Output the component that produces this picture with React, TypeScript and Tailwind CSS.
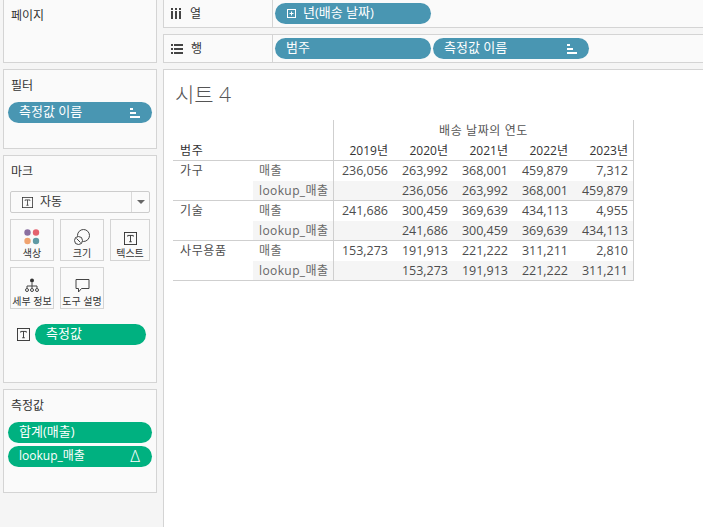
const FONT = "[font-family:'Open_Sans','Noto_Sans_CJK_KR',sans-serif]";

function SortIcon() {
  return (
    <svg width="10" height="10" viewBox="0 0 10 10" fill="#ffffff">
      <rect x="0" y="0" width="3" height="2" />
      <rect x="0" y="4" width="6" height="2" />
      <rect x="0" y="8" width="10" height="2" />
    </svg>
  );
}

function TextIcon({ size = 14 }: { size?: number }) {
  return (
    <svg width={size} height={size} viewBox="0 0 14 14" fill="none" stroke="#333333" strokeWidth="1">
      <rect x="0.5" y="0.5" width="13" height="13" />
      <path d="M4 5V3.7H10V5M7 3.7V10.5M5.6 10.5H8.4" />
    </svg>
  );
}

function Pill({
  label,
  color,
  w,
  icon,
  lead,
  small,
}: {
  label: string;
  color: string;
  w: string;
  icon?: React.ReactNode;
  lead?: React.ReactNode;
  small?: boolean;
}) {
  return (
    <div className={`${color} ${w} flex h-[21px] shrink-0 items-center rounded-full pl-[11px] pr-[12px] leading-none text-white ${small ? "text-[12px]" : "text-[13px]"}`}>
      {lead}
      <span className="flex-1 -translate-y-px whitespace-nowrap">{label}</span>
      {icon}
    </div>
  );
}

function Panel({ title, h, children }: { title: string; h: string; children?: React.ReactNode }) {
  return (
    <section className={`${h} shrink-0 border border-[#d4d4d4] bg-[#fafafa]`}>
      <h2 className="pl-[7px] pt-[8px] text-[12px] font-normal leading-[16px] text-[#333333]">{title}</h2>
      {children}
    </section>
  );
}

function MarkCard({ label, w, children }: { label: string; w: string; children: React.ReactNode }) {
  return (
    <div className={`${w} flex h-[42px] flex-col items-center border border-[#d4d4d4] bg-[#fafafa]`}>
      <div className="flex h-[25px] items-end justify-center">{children}</div>
      <span className="mt-[2px] whitespace-nowrap text-[10px] leading-[12px] text-[#333333]">{label}</span>
    </div>
  );
}

const rows = [
  {
    cat: "가구",
    a: ["236,056", "263,992", "368,001", "459,879", "7,312"],
    b: ["", "236,056", "263,992", "368,001", "459,879"],
  },
  {
    cat: "기술",
    a: ["241,686", "300,459", "369,639", "434,113", "4,955"],
    b: ["", "241,686", "300,459", "369,639", "434,113"],
  },
  {
    cat: "사무용품",
    a: ["153,273", "191,913", "221,222", "311,211", "2,810"],
    b: ["", "153,273", "191,913", "221,222", "311,211"],
  },
];

const years = ["2019년", "2020년", "2021년", "2022년", "2023년"];

function Row({ cat, name, vals, shaded }: { cat: string; name: string; vals: string[]; shaded: boolean }) {
  return (
    <div className={`flex h-[20px] ${shaded ? "border-b border-[#cfcfcf]" : ""}`}>
      <div className="w-[80px] shrink-0 pl-[7px] text-[12px] leading-[19px] tracking-[0.6px] text-[#4d4d4d]">{cat}</div>
      <div className={`w-[81px] shrink-0 border-r border-[#cfcfcf] pl-[6px] text-[12px] leading-[20px] tracking-[0.4px] text-[#666666] ${shaded ? "bg-[#f5f5f5]" : ""}`}>
        {name}
      </div>
      <div className={`flex min-w-0 flex-1 ${shaded ? "bg-[#f5f5f5]" : ""}`}>
        {vals.map((v, i) => (
          <div key={i} className={`${i === 0 ? "w-[59px]" : "w-[60px]"} shrink-0 pr-[5px] text-right text-[12.5px] leading-[19px] text-[#4d4d4d]`}>
            {v}
          </div>
        ))}
      </div>
    </div>
  );
}

export default function App() {
  return (
    <div className={`${FONT} flex h-[527px] w-[703px] overflow-hidden bg-[#f5f5f5]`}>
      <aside className="ml-[3px] flex w-[154px] shrink-0 flex-col gap-[6px]">
        <Panel title="페이지" h="h-[63px] border-t-0" />
        <Panel title="필터" h="h-[80px]">
          <div className="mt-[8px] px-[4px]">
            <Pill label="측정값 이름" color="bg-[#4996b2]" w="w-[144px]" icon={<SortIcon />} />
          </div>
        </Panel>
        <Panel title="마크" h="h-[228px]">
          <div className="mt-[11px] ml-[6px] flex h-[22px] w-[140px] items-stretch rounded-[2px] border border-[#cccccc] bg-[#fafafa]">
            <div className="flex flex-1 items-center gap-[7px] pl-[11px] text-[12px] text-[#333333]">
              <TextIcon size={11} />
              <span>자동</span>
            </div>
            <div className="flex w-[18px] items-center justify-center border-l border-[#d9d9d9]">
              <div className="h-0 w-0 border-x-[4px] border-t-[4px] border-x-transparent border-t-[#666666]" />
            </div>
          </div>
          <div className="ml-[6px] mt-[6px] flex w-[140px] flex-wrap gap-[6px]">
            <MarkCard label="색상" w="w-[44px]">
              <svg width="16" height="16" viewBox="0 0 16 16">
                <circle cx="3.5" cy="3.5" r="3.2" fill="#8a6fa0" />
                <circle cx="12" cy="3.5" r="3.2" fill="#e4636f" />
                <circle cx="3.5" cy="12" r="3.2" fill="#f0a36f" />
                <circle cx="12" cy="12" r="3.2" fill="#5f9aa5" />
              </svg>
            </MarkCard>
            <MarkCard label="크기" w="w-[44px]">
              <svg width="16" height="16" viewBox="0 0 16 16" fill="none" stroke="#444444" strokeWidth="1">
                <circle cx="9.5" cy="6.5" r="6" />
                <circle cx="4.5" cy="11.5" r="4" fill="#fafafa" />
                <path d="M2.5 9.5L6.5 13.5" />
              </svg>
            </MarkCard>
            <MarkCard label="텍스트" w="w-[40px]">
              <TextIcon size={13} />
            </MarkCard>
            <MarkCard label="세부 정보" w="w-[44px]">
              <svg width="14" height="15" viewBox="0 0 14 15" fill="none" stroke="#444444" strokeWidth="1">
                <circle cx="7" cy="2.5" r="2" fill="#333333" stroke="none" />
                <path d="M7 4.5V8M2 10V8H12V10M7 8V10" />
                <circle cx="2" cy="12" r="1.5" />
                <circle cx="7" cy="12" r="1.5" />
                <circle cx="12" cy="12" r="1.5" />
              </svg>
            </MarkCard>
            <MarkCard label="도구 설명" w="w-[44px]">
              <svg width="15" height="14" viewBox="0 0 15 14" fill="none" stroke="#444444" strokeWidth="1">
                <path d="M1 .5H14V9.5H6.5L3.5 13V9.5H1Z" />
              </svg>
            </MarkCard>
          </div>
          <div className="ml-[13px] mt-[15px] flex items-center gap-[5px]">
            <TextIcon size={13} />
            <Pill label="측정값" color="bg-[#00b180]" w="w-[111px]" />
          </div>
        </Panel>
        <Panel title="측정값" h="h-[104px]">
          <div className="mt-[8px] flex flex-col gap-[3px] px-[4px]">
            <Pill label="합계(매출)" color="bg-[#00b180]" w="w-[144px]" />
            <Pill
              label="lookup_매출"
              small
              color="bg-[#00b180]"
              w="w-[144px]"
              icon={<span className="-translate-y-px text-[17px] font-light text-white">Δ</span>}
            />
          </div>
        </Panel>
      </aside>

      <main className="ml-[6px] flex min-w-0 flex-1 flex-col gap-[6px]">
        <div className="flex h-[28px] shrink-0 items-center border-b border-l border-[#d4d4d4] bg-[#fafafa]">
          <div className="flex h-full w-[109px] shrink-0 items-center gap-[8px] border-r border-[#d4d4d4] pl-[7px] text-[12px] text-[#333333]">
            <svg width="11" height="11" viewBox="0 0 11 11" fill="#444444">
              <rect x="0" y="0" width="2" height="2" />
              <rect x="0" y="3" width="2" height="8" />
              <rect x="4" y="0" width="2" height="2" />
              <rect x="4" y="3" width="2" height="8" />
              <rect x="8" y="0" width="2" height="2" />
              <rect x="8" y="3" width="2" height="8" />
            </svg>
            <span>열</span>
          </div>
          <div className="pl-[2px]">
            <Pill
              label="년(배송 날짜)"
              color="bg-[#4996b2]"
              w="w-[156px]"
              lead={
                <svg className="mr-[6px]" width="11" height="11" viewBox="0 0 11 11" fill="none" stroke="#ffffff" strokeWidth="1">
                  <rect x="1.5" y="1.5" width="8" height="8" />
                  <path d="M5.5 3.5V7.5M3.5 5.5H7.5" />
                </svg>
              }
            />
          </div>
        </div>
        <div className="flex h-[29px] shrink-0 items-center border-y border-l border-[#d4d4d4] bg-[#fafafa]">
          <div className="flex h-full w-[109px] shrink-0 items-center gap-[8px] border-r border-[#d4d4d4] pl-[7px] text-[12px] text-[#333333]">
            <svg width="12" height="10" viewBox="0 0 12 10" fill="#444444">
              <rect x="0" y="0" width="2" height="2" />
              <rect x="3" y="0" width="9" height="2" />
              <rect x="0" y="4" width="2" height="2" />
              <rect x="3" y="4" width="9" height="2" />
              <rect x="0" y="8" width="2" height="2" />
              <rect x="3" y="8" width="9" height="2" />
            </svg>
            <span>행</span>
          </div>
          <div className="flex gap-[2px] pl-[2px]">
            <Pill label="범주" color="bg-[#4996b2]" w="w-[156px]" />
            <Pill label="측정값 이름" color="bg-[#4996b2]" w="w-[156px]" icon={<SortIcon />} />
          </div>
        </div>
        <div className="min-h-0 flex-1 border-l border-t border-[#d4d4d4] bg-white pl-[9px]">
          <h1 className="pl-[2px] pt-[11px] text-[21px] font-light leading-[27px] text-[#555555]">시트 4</h1>
          <div className="mt-[12px] w-[461px] border-r border-[#cfcfcf]">
            <div className="flex h-[20px]">
              <div className="w-[161px] shrink-0 border-r border-[#cfcfcf]" />
              <div className="flex-1 text-center text-[12px] leading-[21px] tracking-[0.6px] text-[#555555]">배송 날짜의 연도</div>
            </div>
            <div className="flex h-[21px] border-b border-[#cfcfcf]">
              <div className="w-[161px] shrink-0 border-r border-[#cfcfcf] pl-[7px] text-[12px] leading-[21px] tracking-[0.6px] text-[#333333]">범주</div>
              <div className="flex min-w-0 flex-1">
                {years.map((y, i) => (
                  <div key={y} className={`${i === 0 ? "w-[59px]" : "w-[60px]"} shrink-0 pr-[5px] text-right text-[12px] leading-[21px] text-[#333333]`}>
                    {y}
                  </div>
                ))}
              </div>
            </div>
            {rows.map((r) => (
              <div key={r.cat}>
                <Row cat={r.cat} name="매출" vals={r.a} shaded={false} />
                <Row cat="" name="lookup_매출" vals={r.b} shaded={true} />
              </div>
            ))}
          </div>
        </div>
      </main>
    </div>
  );
}
